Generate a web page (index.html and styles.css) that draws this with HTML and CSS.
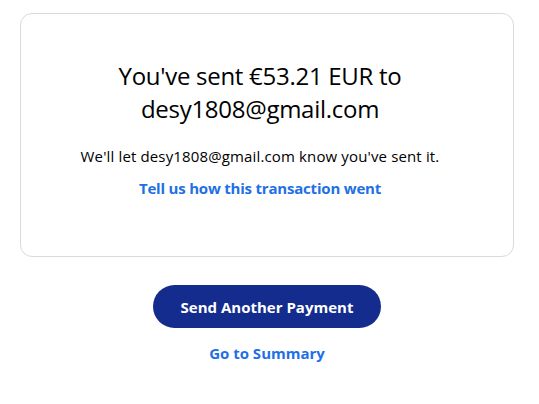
FILE: index.html
```html
<!DOCTYPE html>
<html>
<head>
<meta charset="utf-8">
<link rel="stylesheet" href="styles.css">
</head>
<body>
<main class="page">
  <section class="card">
    <h1 class="title">You've sent €53.21 EUR to desy1808@gmail.com</h1>
    <p class="note">We'll let desy1808@gmail.com know you've sent it.</p>
    <a class="feedback" href="#">Tell us how this transaction went</a>
  </section>
  <div class="actions">
    <button class="primary">Send Another Payment</button>
    <a class="summary" href="#">Go to Summary</a>
  </div>
</main>
</body>
</html>
```
FILE: styles.css
```css
html, body {
  margin: 0;
  background: #fff;
}
body {
  font-family: "Open Sans", "Noto Sans", sans-serif;
  color: #000;
}
.page {
  padding: 13px 25px 0 20px;
}
.card {
  border: 1px solid #dcdad3;
  border-radius: 12px;
  height: 244px;
  box-sizing: border-box;
  padding: 45px 40px 0 26px;
  display: flex;
  flex-direction: column;
  align-items: center;
  text-align: center;
}
.title {
  margin: 0;
  font-size: 24px;
  font-weight: 400;
  line-height: 33px;
  letter-spacing: -0.28px;
  width: 300px;
}
.note {
  margin: 20px 0 0;
  font-size: 15px;
  line-height: 22px;
  letter-spacing: 0.14px;
}
.feedback {
  margin-top: 10px;
  font-size: 15px;
  line-height: 22px;
  font-weight: 700;
  letter-spacing: -0.2px;
  color: #1f6fe5;
  text-decoration: none;
}
.actions {
  display: flex;
  flex-direction: column;
  align-items: center;
  padding-top: 28px;
}
.primary {
  width: 228px;
  height: 43px;
  border: none;
  border-radius: 22px;
  background: #142c8e;
  color: #fff;
  font-family: inherit;
  font-size: 15px;
  font-weight: 700;
}
.summary {
  margin-top: 14px;
  font-size: 15px;
  line-height: 22px;
  font-weight: 700;
  color: #1f6fe5;
  text-decoration: none;
}
```
